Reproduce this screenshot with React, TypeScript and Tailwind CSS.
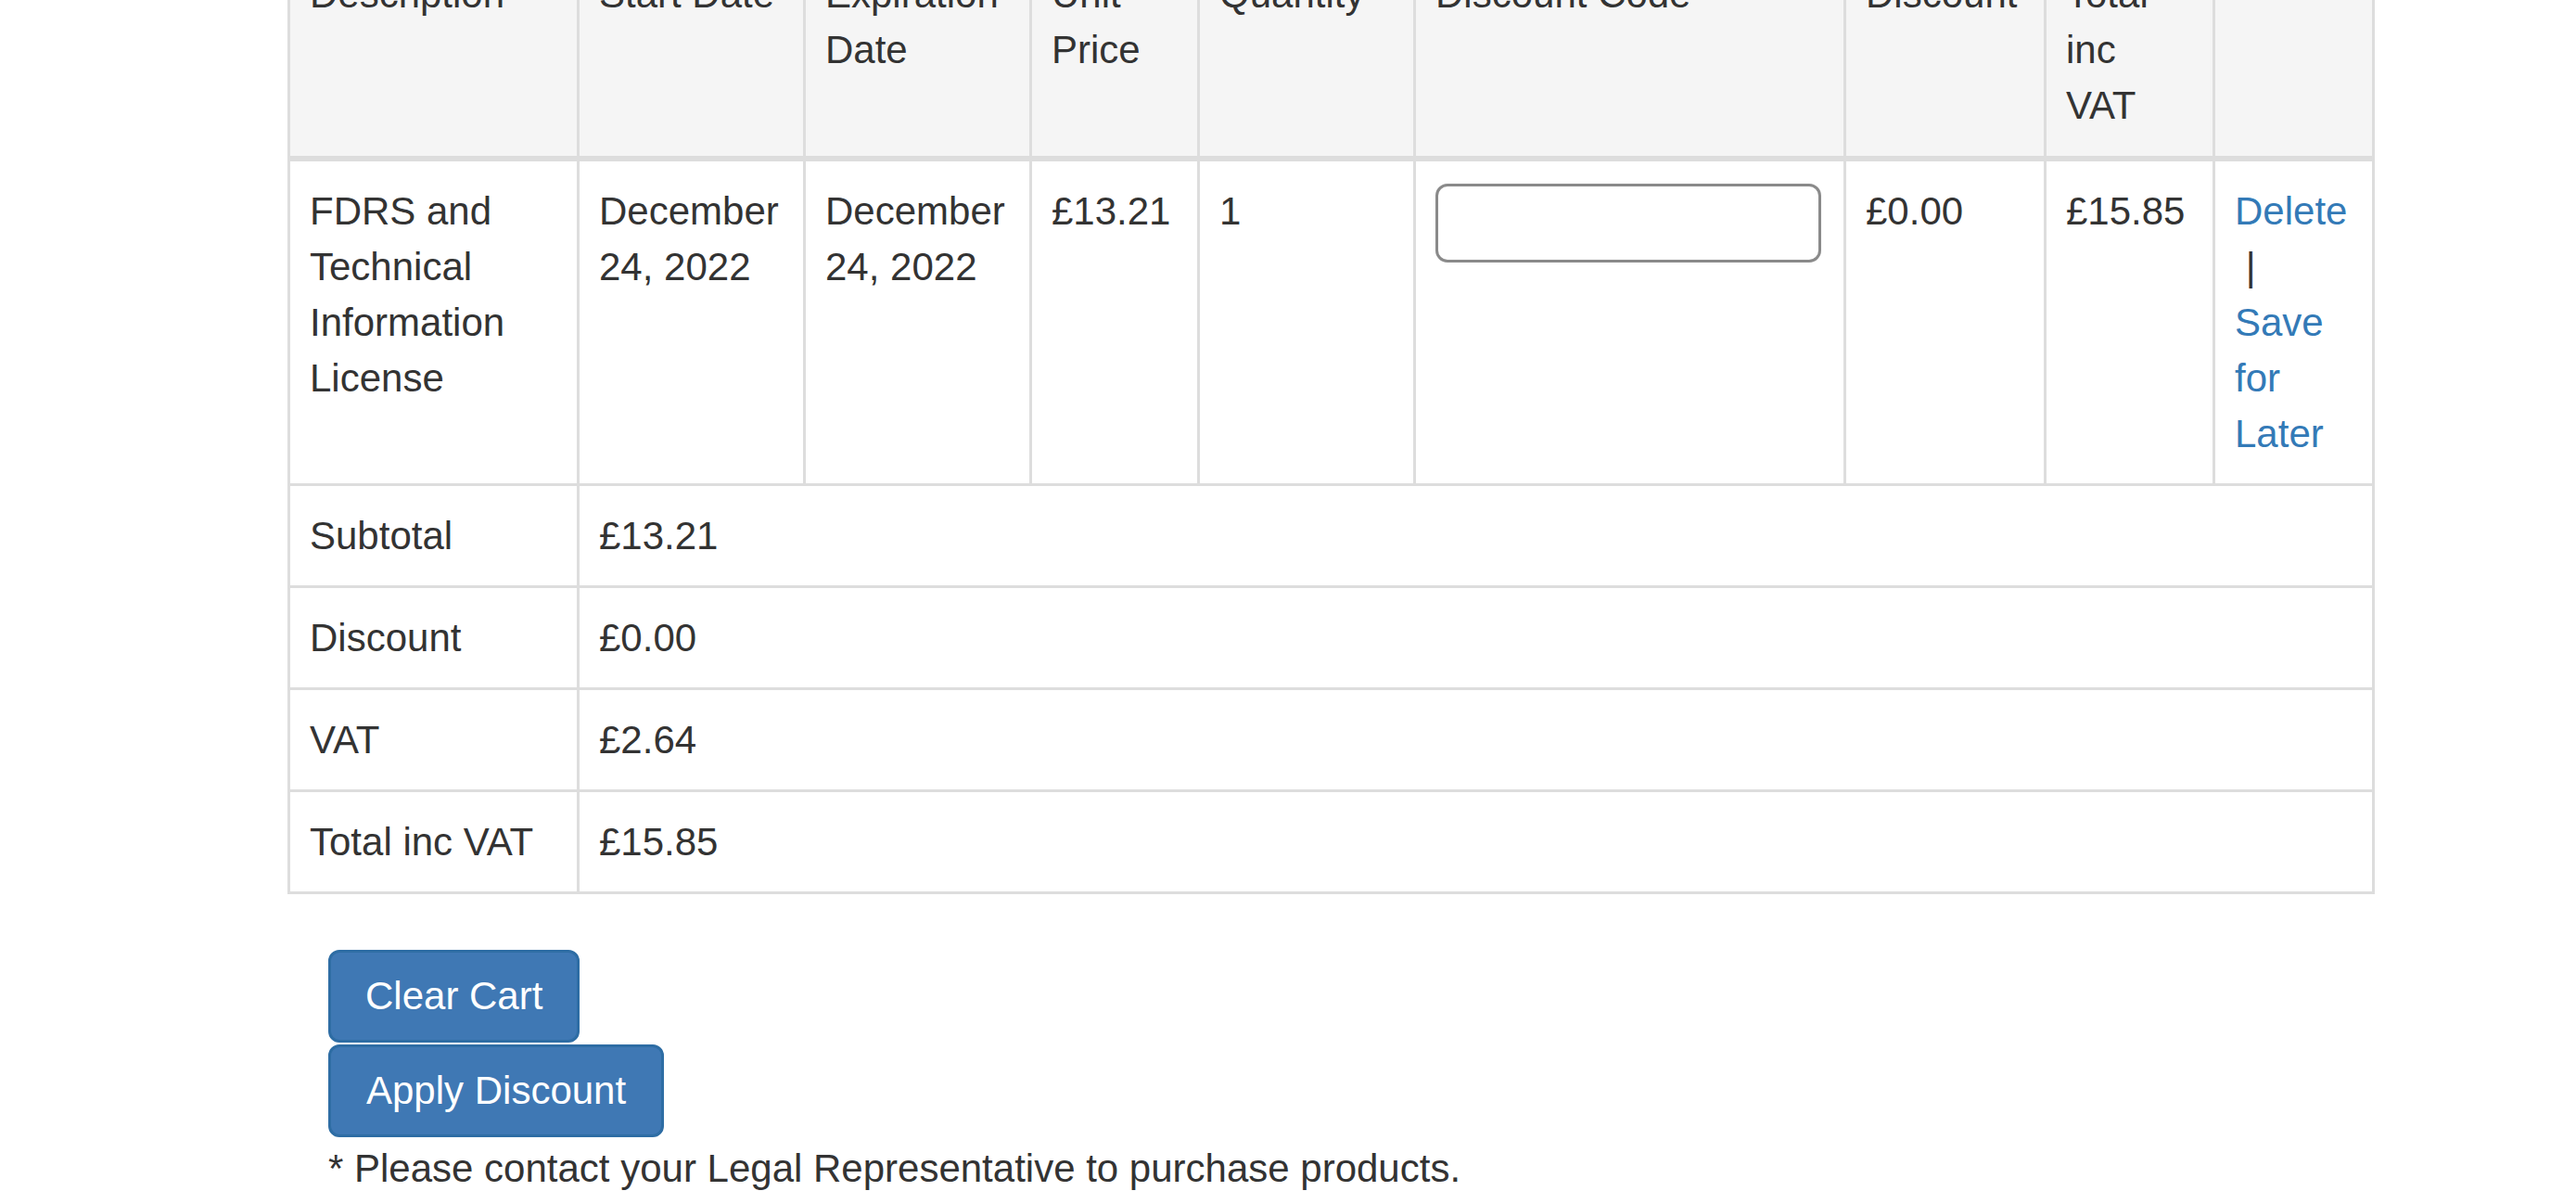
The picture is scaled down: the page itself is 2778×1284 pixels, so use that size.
import React from "react";

const cell = "border-[3px] border-[#dddddd] pl-[21px] pr-[24px] pt-[24px] pb-[23px] align-top text-left font-normal";
const head = "border-[3px] border-b-[6px] border-[#dddddd] bg-[#f5f5f5] pl-[21px] pr-[24px] pt-[24px] pb-[24px] align-top text-left font-normal";

const colWidths = [
  "w-[312px]",
  "w-[244px]",
  "w-[244px]",
  "w-[181px]",
  "w-[233px]",
  "w-[464px]",
  "w-[216px]",
  "w-[182px]",
  "w-[172px]",
];

const headers = [
  "Description",
  "Start Date",
  "Expiration Date",
  "Unit Price",
  "Quantity",
  "Discount Code",
  "Discount",
  "Total inc VAT",
  "",
];

const summary = [
  ["Subtotal", "£13.21"],
  ["Discount", "£0.00"],
  ["VAT", "£2.64"],
  ["Total inc VAT", "£15.85"],
];

export default function App() {
  return (
    <div className="min-h-screen bg-white text-[#333333] font-['Liberation_Sans',Arial,sans-serif] text-[42px] leading-[60px] overflow-hidden">
      <div className="pl-[310px] -mt-[63px]">
        <table className="w-[2248px] table-fixed border-collapse border-[3px] border-[#dddddd] mb-[60px]">
          <colgroup>
            {colWidths.map((w, i) => (
              <col key={i} className={w} />
            ))}
          </colgroup>
          <thead>
            <tr>
              {headers.map((h, i) => (
                <th key={i} className={head}>
                  {h}
                </th>
              ))}
            </tr>
          </thead>
          <tbody>
            <tr>
              <td className={cell}>FDRS and Technical Information License</td>
              <td className={cell}>December 24, 2022</td>
              <td className={cell}>December 24, 2022</td>
              <td className={cell}>£13.21</td>
              <td className={cell}>1</td>
              <td className={cell}>
                <input
                  type="text"
                  className="block w-full h-[85px] border-[3px] border-[#8a8a8a] rounded-[13px] bg-white outline-none"
                />
              </td>
              <td className={cell}>£0.00</td>
              <td className={cell}>£15.85</td>
              <td className={cell}>
                <a href="#" className="text-[#337ab7]">Delete</a>{" "}
                <span>{"\u00a0|"}</span>{" "}
                <a href="#" className="text-[#337ab7]">Save for Later</a>
              </td>
            </tr>
            {summary.map(([label, value]) => (
              <tr key={label}>
                <td className={cell}>{label}</td>
                <td className={cell} colSpan={8}>
                  {value}
                </td>
              </tr>
            ))}
          </tbody>
        </table>
        <div className="pl-[44px]">
          <div className="flex flex-col items-start gap-[2px]">
            <button className="bg-[#3f78b4] border-[3px] border-[#2e6da4] text-white rounded-[12px] px-[37px] py-[17px] text-[42px] leading-[60px]">
              Clear Cart
            </button>
            <button className="bg-[#3f78b4] border-[3px] border-[#2e6da4] text-white rounded-[12px] px-[38px] py-[17px] text-[42px] leading-[60px]">
              Apply Discount
            </button>
          </div>
          <p className="mt-[4px]">* Please contact your Legal Representative to purchase products.</p>
        </div>
      </div>
    </div>
  );
}
